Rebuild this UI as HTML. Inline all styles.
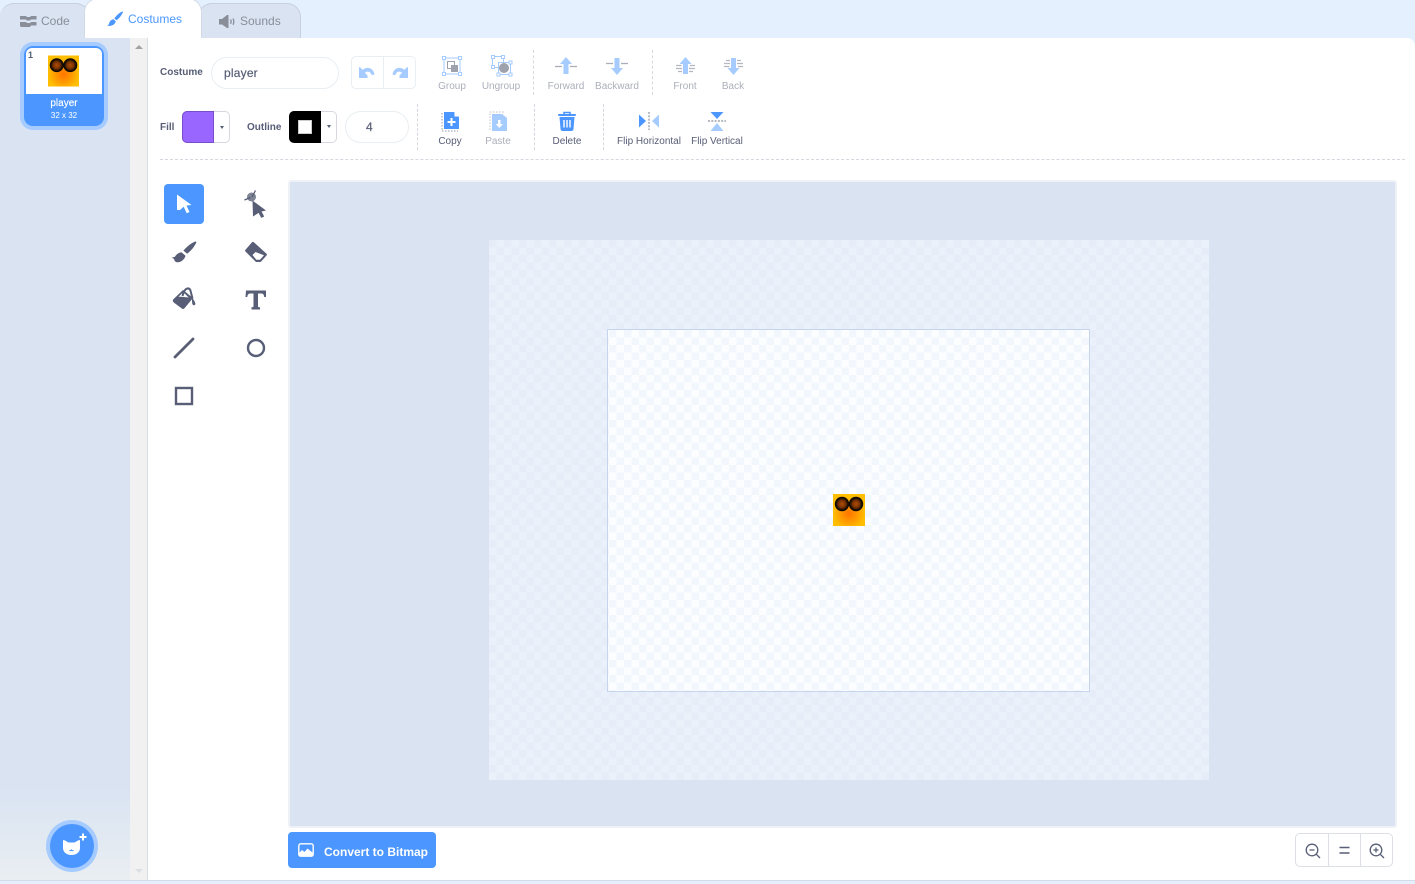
<!DOCTYPE html>
<html><head><meta charset="utf-8"><style>
*{box-sizing:border-box}
html,body{margin:0;padding:0;width:1415px;height:884px;overflow:hidden;background:#e5f0ff;font-family:"Liberation Sans",sans-serif;}
.a{position:absolute}
.t{position:absolute;white-space:nowrap;line-height:1}
.lbl{position:absolute;font-size:10px;line-height:11px;text-align:center;white-space:nowrap;color:#575e75}
.dim{color:#575e75;opacity:.5}
.tab{position:absolute;border:1px solid #c5cfdf;border-bottom:none;border-radius:14px 14px 0 0;background:#d9e3f2}
.vd{position:absolute;width:0;border-left:1px dashed #d5d8de}
svg{position:absolute;overflow:visible}
</style></head><body>
<div class="tab" style="left:0;top:3px;width:90px;height:35px;border-left:none"></div>
<div class="tab" style="left:198px;top:3px;width:103px;height:35px"></div>
<div class="a" style="left:0;top:38px;width:1415px;height:842px;background:#fff;border-radius:0 8px 0 0"></div>
<div class="a" style="left:84px;top:-2px;width:118px;height:40px;background:#fff;border:1px solid #d3dae6;border-bottom:none;border-radius:14px 14px 0 0"></div>

<svg style="left:20px;top:15px" width="17" height="13" viewBox="0 0 17 13"><path fill="#8a8e99" d="M0 1h6l1 1h3l1-1h5.500v3.500H11l-1 1H7l-1-1H0zM0 7h6l1 1h3l1-1h5.500v3.500H11l-1 1.500H1l-1-1z"/></svg>
<div class="t" style="left:41px;top:15px;font-size:12px;color:#8a8e99">Code</div>
<svg style="left:107px;top:11px" width="16" height="16" viewBox="0 0 16 16"><path fill="#4c97ff" d="M15.500 0.500c.4 0 .6.300.4.700-1.100 2.600-3.400 6-6.500 8.100L7.300 7.400C9.500 4.300 13 1.200 15.500.5zM6.500 8.200l2.200 2c-.3 2.500-2.500 5-8.700 4.700 1.600-.8 2-1.800 2.300-3 .4-2 2-3.300 4.200-3.700z"/></svg>
<div class="t" style="left:128px;top:13px;font-size:12px;color:#4c97ff">Costumes</div>
<svg style="left:219px;top:15px" width="17" height="13" viewBox="0 0 17 13"><path fill="#8a8e99" d="M0 4h3l5-4h1.500v13H8L3 9.500H0z"/><path fill="none" stroke="#8a8e99" stroke-width="1.300" d="M11.500 4.500c.8 1.300.8 3 0 4.300M14 3.500c1 2 1 4.300 0 6.300"/></svg>
<div class="t" style="left:240px;top:15px;font-size:12px;color:#8a8e99">Sounds</div>

<div class="a" style="left:0;top:38px;width:130px;height:842px;background:linear-gradient(#d9e3f2 0,#d9e3f2 750px,#e9eef2 842px)"></div>
<div class="a" style="left:130px;top:38px;width:17px;height:842px;background:#f1f1f1"></div>
<div class="a" style="left:147px;top:38px;width:1px;height:842px;background:#d9dfe8"></div>
<div class="a" style="left:135px;top:45px;width:0;height:0;border:4px solid transparent;border-top:none;border-bottom:4px solid #a3a3a3"></div>
<div class="a" style="left:135px;top:869px;width:0;height:0;border:4px solid transparent;border-bottom:none;border-top:4px solid #dcdfe3"></div>
<div class="a" style="left:0;top:880px;width:1415px;height:1px;background:#d5dbe5"></div>

<!-- costume card -->
<div class="a" style="left:20px;top:42px;width:88px;height:88px;border-radius:13px;background:#a6cbff"></div>
<div class="a" style="left:24px;top:46px;width:80px;height:80px;border-radius:9px;background:#4c97ff;overflow:hidden">
  <div class="a" style="left:2px;top:2px;width:76px;height:46px;background:#fff;border-radius:6px 6px 0 0"></div>
</div>
<div class="t" style="left:28px;top:51px;font-size:9px;font-weight:bold;color:#575e75">1</div>
<svg style="left:48px;top:55px" width="31" height="32" viewBox="0 0 32 32"><defs>
<radialGradient id="g" cx=".5" cy=".6" r=".5"><stop offset="0" stop-color="#ff7400"/><stop offset=".6" stop-color="#ff9f00"/><stop offset="1" stop-color="#ffbf00"/></radialGradient>
<radialGradient id="e"><stop offset="0" stop-color="#b04c00"/><stop offset=".5" stop-color="#7a3300"/><stop offset=".8" stop-color="#1c0e00"/><stop offset="1" stop-color="#0a0500"/></radialGradient></defs>
<rect width="32" height="32" fill="url(#g)"/><circle cx="9" cy="10" r="7.200" fill="url(#e)"/><circle cx="23" cy="10" r="7.200" fill="url(#e)"/></svg>
<div class="t" style="left:24px;top:99px;width:80px;text-align:center;font-size:10px;color:#fff;-webkit-text-stroke:.15px #fff">player</div>
<div class="t" style="left:24px;top:112px;width:80px;text-align:center;font-size:8px;color:#fff">32 x 32</div>

<!-- add button -->
<div class="a" style="left:46px;top:820px;width:52px;height:52px;border-radius:50%;background:#a6cbff"></div>
<div class="a" style="left:50px;top:824px;width:44px;height:44px;border-radius:50%;background:#4c97ff"></div>
<svg style="left:62px;top:832px" width="26" height="26" viewBox="0 0 26 26"><path fill="#fff" d="M2 8l4.500 2.500h6L17 8c.5 0 1 .3 1 1v7c0 4-3.500 7-8.500 7S1 20 1 16V9c0-.7.5-1 1-1z"/><path fill="#fff" d="M20 1.500h2v2.500h2.500v2H22v2.500h-2V6h-2.500V4H20z"/><path fill="none" stroke="#4c97ff" stroke-width="1" d="M7.500 18c.8 1 1.500 1 2 0 .5 1 1.200 1 2 0"/></svg>

<!-- row 1 -->
<div class="t" style="left:160px;top:68px;font-size:10px;font-weight:bold;color:#575e75;">Costume</div>
<div class="a" style="left:211px;top:57px;width:128px;height:32px;border:1px solid #e9eef2;border-radius:16px"></div>
<div class="t" style="left:224px;top:67px;font-size:12px;letter-spacing:.2px;color:#575e75;-webkit-text-stroke:.2px #575e75">player</div>
<div class="a" style="left:351px;top:56px;width:65px;height:33px;border:1px solid #e9eef2;border-radius:5px"></div>
<div class="a" style="left:383px;top:56px;width:1px;height:33px;background:#e9eef2"></div>
<svg style="left:359px;top:67px" width="16" height="12" viewBox="0 0 16 12"><path fill="#a6cbff" d="M0 0l1 .3 2.500 2.500C6 .8 9 .3 11.500 1.500c2 1 3.500 3 4 6l-2.800.800c-.5-1.800-1.500-3-2.900-3.500-1.300-.4-2.700-.1-3.900.9L8.500 8.500V11H0z"/></svg>
<svg style="left:392px;top:67px" width="16" height="12" viewBox="0 0 16 12"><g transform="matrix(-1 0 0 1 16 0)"><path fill="#a6cbff" d="M0 0l1 .3 2.500 2.500C6 .8 9 .3 11.500 1.500c2 1 3.500 3 4 6l-2.800.800c-.5-1.800-1.500-3-2.900-3.500-1.300-.4-2.700-.1-3.900.9L8.500 8.500V11H0z"/></g></svg>

<!-- group -->
<svg style="left:442px;top:56px" width="20" height="20" viewBox="0 0 20 20"><rect x="2" y="2" width="16" height="16" fill="none" stroke="#a6cbff"/><g fill="#fff" stroke="#a6cbff"><rect x=".5" y=".5" width="3" height="3"/><rect x="16.500" y=".5" width="3" height="3"/><rect x=".5" y="16.500" width="3" height="3"/><rect x="16.500" y="16.500" width="3" height="3"/></g><rect x="5.500" y="5.500" width="7" height="7" fill="none" stroke="#9ea2ac"/><rect x="9" y="9" width="7" height="7" fill="#9ea2ac"/></svg>
<div class="lbl dim" style="left:432px;top:81px;width:40px">Group</div>
<svg style="left:491px;top:55px" width="22" height="22" viewBox="0 0 22 22"><g fill="none" stroke="#a6cbff"><rect x="1.500" y="1.500" width="11" height="11"/><rect x="7.500" y="7.500" width="12" height="12"/></g><g fill="#fff" stroke="#a6cbff"><rect x=".5" y=".5" width="3" height="3"/><rect x="10.500" y=".5" width="3" height="3"/><rect x=".5" y="10.500" width="3" height="3"/><rect x="18" y="6" width="3" height="3"/><rect x="6" y="18" width="3" height="3"/><rect x="18" y="18" width="3" height="3"/></g><circle cx="13" cy="13" r="5" fill="#9ea2ac"/></svg>
<div class="lbl dim" style="left:476px;top:81px;width:50px">Ungroup</div>
<div class="vd" style="left:533px;top:50px;height:45px"></div>

<svg style="left:555px;top:57px" width="22" height="18" viewBox="0 0 22 18"><path fill="#a6cbff" d="M11 0l6 7h-3.500v10h-5V7H5z"/><path stroke="#a9adb7" stroke-width="1.200" d="M0 9.500h7M15 9.500h7"/></svg>
<div class="lbl dim" style="left:541px;top:81px;width:50px">Forward</div>
<svg style="left:606px;top:57px" width="22" height="18" viewBox="0 0 22 18"><path fill="#a6cbff" d="M11 18l-6-7h3.500V1h5v10H17z"/><path stroke="#a9adb7" stroke-width="1.200" d="M0 6.500h7M15 6.500h7"/></svg>
<div class="lbl dim" style="left:592px;top:81px;width:50px">Backward</div>
<div class="vd" style="left:652px;top:50px;height:45px"></div>
<svg style="left:675px;top:57px" width="21" height="18" viewBox="0 0 21 18"><path fill="#a6cbff" d="M10.500 0l6 7H13v10H8V7H4.500z"/><path stroke="#b4b7bf" stroke-width="1.200" d="M1 8.500h5.500M15 8.500h5M1 11.500h6M14 11.500h6M3 14.500h4M14 14.500h4"/></svg>
<div class="lbl dim" style="left:665px;top:81px;width:40px">Front</div>
<svg style="left:723px;top:57px" width="21" height="18" viewBox="0 0 21 18"><path fill="#a6cbff" d="M10.500 18l-6-7H8V1h5v10h3.500z"/><path stroke="#b4b7bf" stroke-width="1.200" d="M1 9.500h5.500M15 9.500h5M1 6.500h6M14 6.500h6M3 3.500h4M14 3.500h4"/></svg>
<div class="lbl dim" style="left:713px;top:81px;width:40px">Back</div>

<!-- row 2 -->
<div class="t" style="left:160px;top:123px;font-size:10px;font-weight:bold;color:#575e75;">Fill</div>
<div class="a" style="left:182px;top:111px;width:48px;height:32px;border:1px solid #d5d8de;border-radius:5px;background:#fff"></div>
<div class="a" style="left:182px;top:111px;width:32px;height:32px;background:#9966ff;border:1px solid #774dcb;border-radius:5px 0 0 5px"></div>
<div class="a" style="left:220px;top:126px;border:2.500px solid transparent;border-bottom:none;border-top:3px solid #575e75"></div>
<div class="t" style="left:247px;top:123px;font-size:10px;font-weight:bold;color:#575e75;">Outline</div>
<div class="a" style="left:289px;top:111px;width:48px;height:32px;border:1px solid #d5d8de;border-radius:5px;background:#fff"></div>
<div class="a" style="left:289px;top:111px;width:32px;height:32px;background:#000;border-radius:5px 0 0 5px"></div>
<div class="a" style="left:298px;top:120px;width:14px;height:14px;background:#fff;border:1px solid #ccc"></div>
<div class="a" style="left:327px;top:125px;border:2.500px solid transparent;border-bottom:none;border-top:3px solid #575e75"></div>
<div class="a" style="left:345px;top:111px;width:64px;height:32px;border:1px solid #e9eef2;border-radius:16px"></div>
<div class="t" style="left:366px;top:121px;font-size:12px;color:#575e75;-webkit-text-stroke:.2px #575e75">4</div>
<div class="vd" style="left:417px;top:104px;height:46px"></div>

<svg style="left:441px;top:111px" width="19" height="21" viewBox="0 0 19 21"><path fill="none" stroke="#a9adb7" stroke-width="1.200" stroke-dasharray="1.500 1.500" d="M1 2v18h16"/><path fill="#4c97ff" d="M3 1h10l5 5v12H3z"/><path fill="#fff" d="M13.500 1l4.500 4.500h-4.500z"/><path fill="#fff" d="M9.500 7h2v3h3v2h-3v3h-2v-3h-3v-2h3z"/></svg>
<div class="lbl" style="left:430px;top:136px;width:40px">Copy</div>
<svg style="left:489px;top:111px" width="19" height="21" viewBox="0 0 19 21"><path fill="none" stroke="#c9ccd2" stroke-width="1.200" stroke-dasharray="1.500 1.500" d="M1 19V1h14"/><path fill="#a6cbff" d="M3 3h10l5 4v13H3z"/><path fill="#fff" d="M9 9h2.500v4H14l-3.700 4-3.600-4H9z"/></svg>
<div class="lbl dim" style="left:478px;top:136px;width:40px">Paste</div>
<div class="vd" style="left:534px;top:104px;height:46px"></div>

<svg style="left:558px;top:111px" width="18" height="21" viewBox="0 0 18 21"><path fill="none" stroke="#4c97ff" stroke-width="1.600" d="M6 3V1.500h6V3"/><path fill="#4c97ff" d="M1 3h16c.6 0 1 .4 1 1s-.4 1-1 1H1C.4 5 0 4.600 0 4s.4-1 1-1zM1.500 6h15l-1 12c-.1 1.200-1 2-2 2h-9c-1 0-1.900-.8-2-2z"/><path stroke="#fff" stroke-width="1.400" d="M6 9v7.500M9 9v7.500M12 9v7.500"/></svg>
<div class="lbl" style="left:547px;top:136px;width:40px">Delete</div>
<div class="vd" style="left:603px;top:104px;height:46px"></div>

<svg style="left:639px;top:111px" width="20" height="20" viewBox="0 0 20 20"><path fill="#4c97ff" d="M0 3.500l7 6.500-7 6.500z"/><path fill="#a6cbff" d="M20 3.500L13 10l7 6.500z"/><path stroke="#9ea2ac" stroke-width="1.400" stroke-dasharray="2 1.300" d="M10 1v18"/></svg>
<div class="lbl" style="left:614px;top:136px;width:70px">Flip Horizontal</div>
<svg style="left:707px;top:111px" width="20" height="20" viewBox="0 0 20 20"><path fill="#4c97ff" d="M3.500 1h13L10 8z"/><path fill="#a6cbff" d="M3.500 20h13L10 12z"/><path stroke="#9ea2ac" stroke-width="1.400" stroke-dasharray="2 1.300" d="M1 10h18"/></svg>
<div class="lbl" style="left:682px;top:136px;width:70px">Flip Vertical</div>

<div class="a" style="left:160px;top:159px;width:1245px;border-top:1px dashed #d5d8de"></div>

<!-- tools -->
<div class="a" style="left:164px;top:184px;width:40px;height:40px;background:#4c97ff;border-radius:4px"></div>
<svg style="left:177px;top:194px" width="16" height="20" viewBox="0 0 16 20"><path fill="#fff" d="M0 .5L14.500 11l-5 .5 3 6.500-2.800 1.300-3-6.500L3 16l-3 0z"/></svg>
<svg style="left:244px;top:190px" width="24" height="28" viewBox="0 0 24 28"><circle cx="7.500" cy="7" r="4.500" fill="#7f8494"/><path stroke="#575e75" stroke-width="1.300" fill="none" d="M11.500 .5L8 7M.5 10l6-2.500"/><path fill="#575e75" d="M8.500 10.500L22 20.500l-4.500 1 2.700 5-3 1.400-2.600-5-5.600 3.600z"/></svg>
<svg style="left:171px;top:241px" width="26" height="22" viewBox="0 0 26 22"><path fill="#575e75" d="M24.500.5c.7 0 1 .6.700 1.300-1.600 3.500-5 8-9 11l-3.800-3.200C15.500 6 21 1.300 24.500.5zM10.500 11.300l4 3.400c-.8 3.500-4.500 6.700-8 6.500-2 0-3-1.200-3.200-2.500-.3-1-1.300-1.500-2.500-1.800 1-.6 2-1 3-1 1.500-2.500 3.700-4.200 6.700-4.600z"/></svg>
<svg style="left:244px;top:241px" width="24" height="22" viewBox="0 0 24 22"><path fill="#575e75" d="M8 1.300c.6-.5 1.300-.5 1.900 0l12.500 11.300c.7.600.7 1.200.2 1.800l-5.300 6c-.6.600-1.300.8-2 .6H12L1.500 10.500c-.6-.6-.6-1.200 0-1.800z"/><path fill="#fff" d="M8.500 14l3-3 8.500 3.300-3.700 4.100c-.3.300-.7.400-1.100.4h-2.900z"/></svg>
<svg style="left:172px;top:287px" width="24" height="24" viewBox="0 0 24 24"><path fill="#575e75" d="M11 3l10 8-8.500 10.300c-.7.800-1.700.8-2.500.3L1.800 15.500C.7 14.600.5 13.300 1.400 12.300z"/><path fill="#fff" d="M11.300 5.300l5.400 5.200c-3-.2-7.500-.7-10.200-.7z"/><path fill="none" stroke="#575e75" stroke-width="2" d="M10.500 9c.8-3 1.800-6 4-7.200 1.600-.7 3-.2 3.800 1.200L20.500 11.500"/><path fill="#575e75" d="M20.500 11c1.500 2.500 3.300 4.700 2.700 6.500-.4 1-2 1-2.600 0-.6-1.200-.6-3-.6-6z"/></svg>
<svg style="left:245px;top:290px" width="22" height="20" viewBox="0 0 22 20"><path fill="#575e75" d="M1 .5h20v6.500h-1.800c-.2-2.300-.9-3.500-3.200-3.500h-3v12.800c0 .8.500 1 2 1V19.500H6.500v-2.200c1.500 0 2-.2 2-1V3.500h-3c-2.300 0-3 1.200-3.200 3.500H.5z"/></svg>
<svg style="left:173px;top:337px" width="22" height="22" viewBox="0 0 22 22"><path stroke="#575e75" stroke-width="2.800" stroke-linecap="round" d="M2 20L20 2"/></svg>
<svg style="left:246px;top:338px" width="20" height="20" viewBox="0 0 20 20"><circle cx="10" cy="10" r="8" fill="none" stroke="#575e75" stroke-width="2.400"/></svg>
<svg style="left:175px;top:387px" width="18" height="18" viewBox="0 0 18 18"><rect x="1" y="1" width="16" height="16" fill="none" stroke="#575e75" stroke-width="2.400"/></svg>

<!-- canvas -->
<div class="a" style="left:288px;top:180px;width:1109px;height:648px;background:#d9e3f2;border:2px solid #eef1f6;border-radius:3px"></div>
<div class="a" style="left:489px;top:240px;width:720px;height:540px;background-color:#e8eef9;background-image:repeating-conic-gradient(#ebf1fa 0 25%,#e6edf8 0 50%);background-size:15px 15px"></div>
<div class="a" style="left:607px;top:329px;width:483px;height:363px;border:1px solid #c5d5ee;background-color:#fff;background-image:repeating-conic-gradient(#fcfdff 0 25%,#f2f7fd 0 50%);background-size:15px 15px;background-position:1px 0"></div>
<svg style="left:833px;top:494px" width="32" height="32" viewBox="0 0 32 32"><rect width="32" height="32" fill="url(#g)"/><circle cx="9" cy="10" r="7.200" fill="url(#e)"/><circle cx="23" cy="10" r="7.200" fill="url(#e)"/></svg>

<!-- convert -->
<div class="a" style="left:288px;top:832px;width:148px;height:36px;background:#4c97ff;border-radius:4px"></div>
<svg style="left:298px;top:843px" width="16" height="14" viewBox="0 0 16 14"><rect x=".8" y=".8" width="14.400" height="12.400" rx="2" fill="#4c97ff" stroke="#fff" stroke-width="1.400"/><path fill="#fff" d="M1 12V10l3-3 2.500 2 3-3.500L15 10v2c0 .6-.4 1-1 1H2c-.6 0-1-.4-1-1z"/></svg>
<div class="t" style="left:324px;top:846px;font-size:12px;font-weight:bold;color:#fff">Convert to Bitmap</div>

<!-- zoom -->
<div class="a" style="left:1295px;top:833px;width:98px;height:34px;border:1px solid #dcdfe3;border-radius:5px"></div>
<div class="a" style="left:1328px;top:833px;width:1px;height:34px;background:#dcdfe3"></div>
<div class="a" style="left:1360px;top:833px;width:1px;height:34px;background:#dcdfe3"></div>
<svg style="left:1305px;top:843px" width="16" height="16" viewBox="0 0 16 16"><circle cx="7" cy="7" r="5.800" fill="none" stroke="#575e75" stroke-width="1.300"/><path stroke="#575e75" stroke-width="1.300" d="M11.500 11.500l3.500 3.500M4.500 7h5"/></svg>
<svg style="left:1339px;top:846px" width="11" height="9" viewBox="0 0 11 9"><path stroke="#575e75" stroke-width="1.600" d="M.5 1.500h10M.5 7h10"/></svg>
<svg style="left:1369px;top:843px" width="16" height="16" viewBox="0 0 16 16"><circle cx="7" cy="7" r="5.800" fill="none" stroke="#575e75" stroke-width="1.300"/><path stroke="#575e75" stroke-width="1.300" d="M11.500 11.500l3.500 3.500M4.500 7h5M7 4.500v5"/></svg>
</body></html>
